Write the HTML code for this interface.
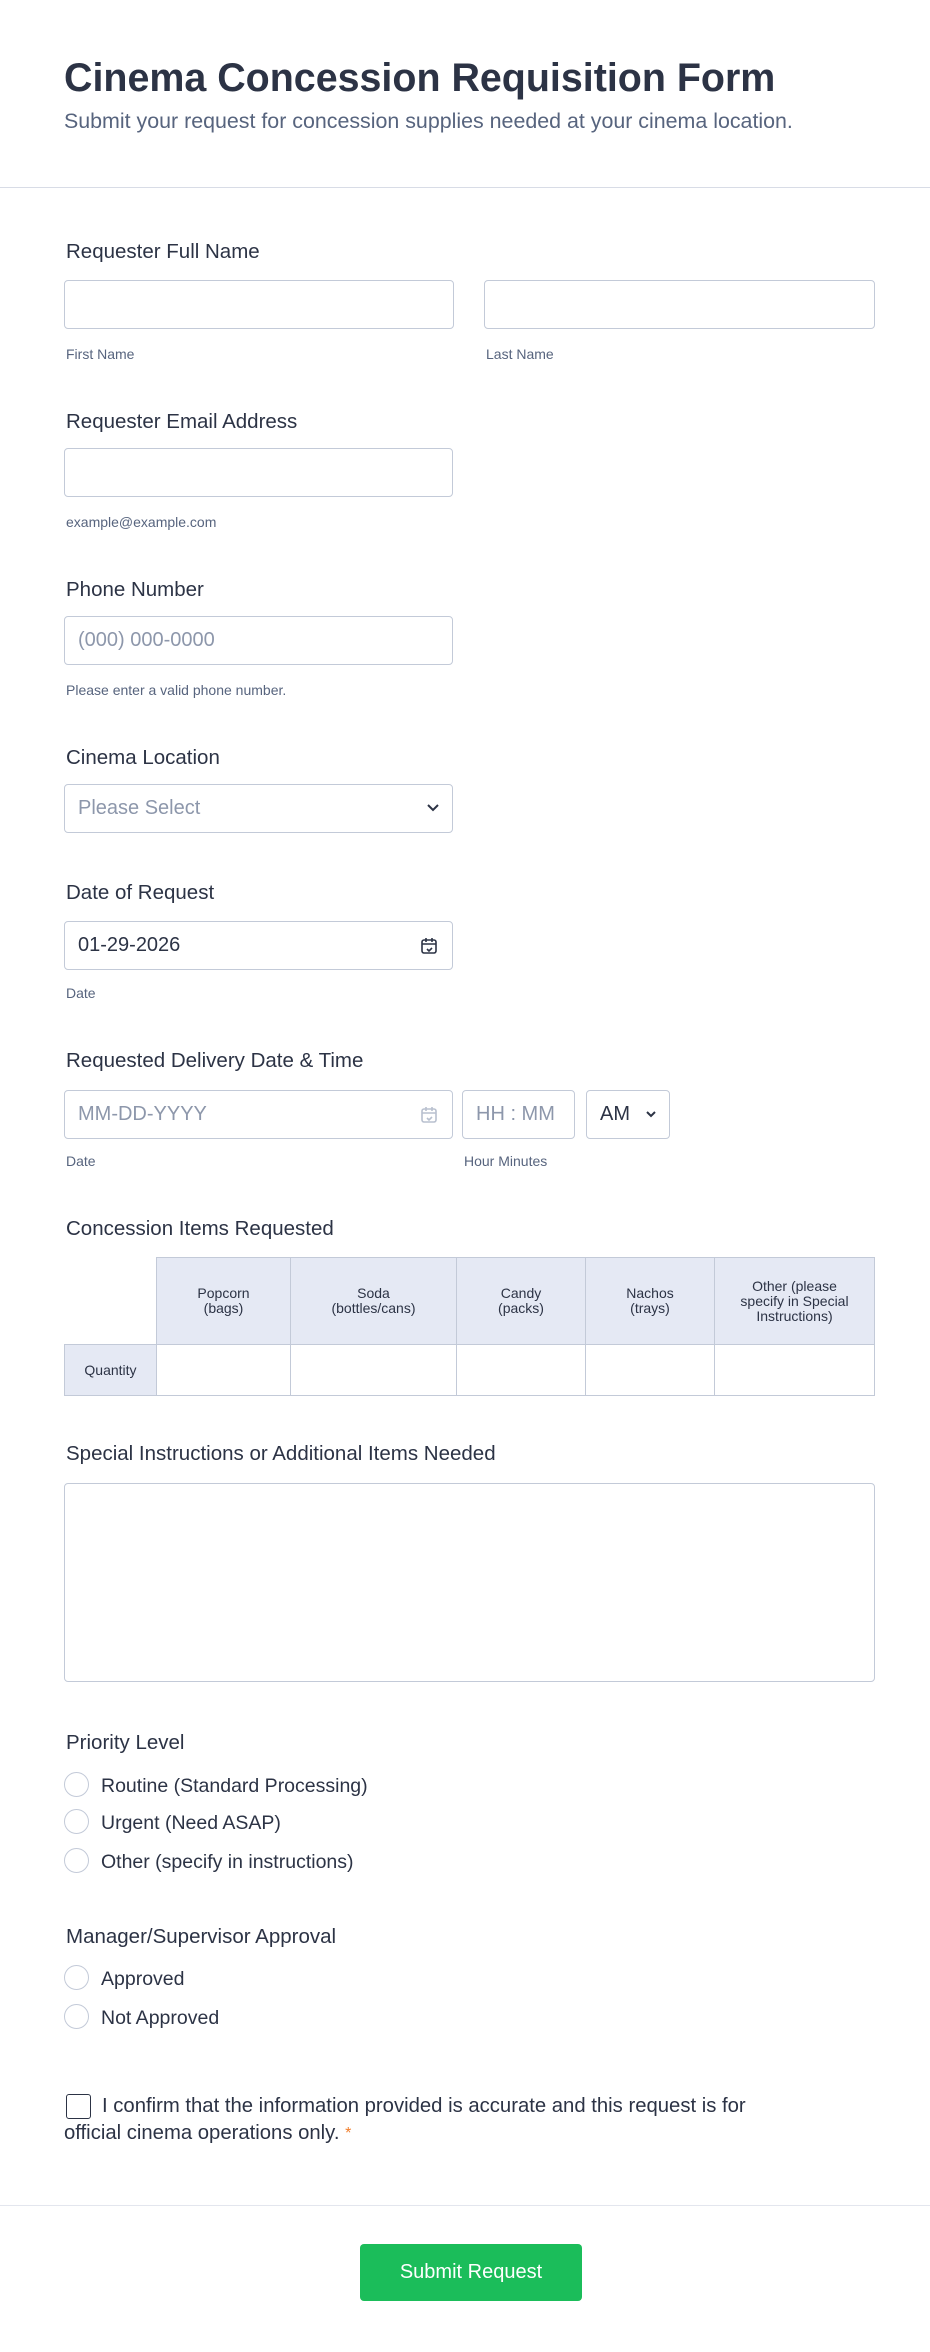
<!DOCTYPE html>
<html><head><meta charset="utf-8"><style>
*{box-sizing:border-box;margin:0;padding:0}
body{width:930px;height:2352px;background:#fff;font-family:"Liberation Sans",sans-serif;color:#2c3345;position:relative;overflow:hidden}
.a{position:absolute}
.lbl{position:absolute;left:66px;font-size:20.5px;font-weight:500;line-height:24px;top:2px}
.sub{position:absolute;font-size:14px;color:#57647e;line-height:18px}
.in{position:absolute;border:1px solid #c3cad8;border-radius:4px;background:#fff;height:49px;font-size:20px;line-height:47px;padding-left:13px}
.ph{color:#8d97ab}
.r{position:absolute;left:64px;width:25px;height:25px;border:1.5px solid #c3cad8;border-radius:50%}
.rt{position:absolute;left:101px;font-size:19.5px;line-height:24px;margin-top:2px}
table{border-collapse:collapse;position:absolute;left:64px;top:1257px;width:811px;font-size:14px;text-align:center}
td{border:1px solid #c3cad8}
.h{background:#e5e9f4;line-height:15px}
</style></head><body>
<div class="a" style="left:64px;top:52px;font-size:39.4px;font-weight:700;line-height:52px">Cinema Concession Requisition Form</div>
<div class="a" style="left:64px;top:108px;font-size:21.4px;color:#57647e;line-height:26px">Submit your request for concession supplies needed at your cinema location.</div>
<div class="a" style="left:0;top:187px;width:930px;height:1px;background:#d8dce6"></div>

<div class="lbl" style="top:240px">Requester Full Name</div>
<div class="in" style="left:64px;top:280px;width:390px"></div>
<div class="in" style="left:484px;top:280px;width:391px"></div>
<div class="sub" style="left:66px;top:345px">First Name</div>
<div class="sub" style="left:486px;top:345px">Last Name</div>

<div class="lbl" style="top:410px">Requester Email Address</div>
<div class="in" style="left:64px;top:448px;width:389px"></div>
<div class="sub" style="left:66px;top:513px">example@example.com</div>

<div class="lbl" style="top:578px">Phone Number</div>
<div class="in ph" style="left:64px;top:616px;width:389px">(000) 000-0000</div>
<div class="sub" style="left:66px;top:681px">Please enter a valid phone number.</div>

<div class="lbl" style="top:746px">Cinema Location</div>
<div class="in ph" style="left:64px;top:784px;width:389px">Please Select
<svg class="a" style="right:12px;top:18px" width="14" height="10" viewBox="0 0 14 10"><path d="M2 2l5 5 5-5" fill="none" stroke="#2c3345" stroke-width="2"/></svg></div>

<div class="lbl" style="top:881px">Date of Request</div>
<div class="in" style="left:64px;top:921px;width:389px">01-29-2026
<svg class="a" style="right:14px;top:14px" width="18" height="20" viewBox="0 0 18 20"><rect x="2" y="4" width="14" height="13" rx="2" fill="none" stroke="#2c3345" stroke-width="1.6"/><path d="M2 8h14M6 2v4M12 2v4M7 13l2 2 3-3" fill="none" stroke="#2c3345" stroke-width="1.6"/></svg></div>
<div class="sub" style="left:66px;top:984px">Date</div>

<div class="lbl" style="top:1049px">Requested Delivery Date &amp; Time</div>
<div class="in ph" style="left:64px;top:1090px;width:389px">MM-DD-YYYY
<svg class="a" style="right:14px;top:14px" width="18" height="20" viewBox="0 0 18 20"><rect x="2" y="4" width="14" height="13" rx="2" fill="none" stroke="#b8c0cf" stroke-width="1.6"/><path d="M2 8h14M6 2v4M12 2v4M7 13l2 2 3-3" fill="none" stroke="#b8c0cf" stroke-width="1.6"/></svg></div>
<div class="in ph" style="left:462px;top:1090px;width:113px">HH : MM</div>
<div class="in" style="left:586px;top:1090px;width:84px">AM
<svg class="a" style="right:12px;top:19px" width="12" height="9" viewBox="0 0 12 9"><path d="M2 2l4 4 4-4" fill="none" stroke="#2c3345" stroke-width="2"/></svg></div>
<div class="sub" style="left:66px;top:1152px">Date</div>
<div class="sub" style="left:464px;top:1152px">Hour Minutes</div>

<div class="lbl" style="top:1217px">Concession Items Requested</div>
<table>
<tr style="height:87px"><td style="border:none;border-bottom:1px solid #c3cad8;width:92px"></td><td class="h" style="width:134px">Popcorn<br>(bags)</td><td class="h" style="width:166px">Soda<br>(bottles/cans)</td><td class="h" style="width:129px">Candy<br>(packs)</td><td class="h" style="width:129px">Nachos<br>(trays)</td><td class="h">Other (please<br>specify in Special<br>Instructions)</td></tr>
<tr style="height:51px"><td class="h">Quantity</td><td></td><td></td><td></td><td></td><td></td></tr>
</table>

<div class="lbl" style="top:1442px">Special Instructions or Additional Items Needed</div>
<div class="in" style="left:64px;top:1483px;width:811px;height:199px"></div>

<div class="lbl" style="top:1731px">Priority Level</div>
<div class="r" style="top:1772px"></div><div class="rt" style="top:1772px">Routine (Standard Processing)</div>
<div class="r" style="top:1809px"></div><div class="rt" style="top:1809px">Urgent (Need ASAP)</div>
<div class="r" style="top:1848px"></div><div class="rt" style="top:1848px">Other (specify in instructions)</div>

<div class="lbl" style="top:1925px">Manager/Supervisor Approval</div>
<div class="r" style="top:1965px"></div><div class="rt" style="top:1965px">Approved</div>
<div class="r" style="top:2004px"></div><div class="rt" style="top:2004px">Not Approved</div>

<div class="a" style="left:66px;top:2094px;width:25px;height:25px;border:1.5px solid #2c3345;border-radius:3px"></div>
<div class="a" style="left:64px;top:2093px;width:725px;font-size:20.3px;line-height:27px;text-indent:38px">I confirm that the information provided is accurate and this request is for official cinema operations only. <span style="color:#f17d2a;font-size:16px;vertical-align:top">*</span></div>

<div class="a" style="left:0;top:2205px;width:930px;height:1px;background:#e3e6ee"></div>
<div class="a" style="left:360px;top:2244px;width:222px;height:57px;background:#1bbd5a;border-radius:4px;color:#fff;font-size:20px;font-weight:500;line-height:57px;text-align:center">Submit Request</div>
</body></html>
